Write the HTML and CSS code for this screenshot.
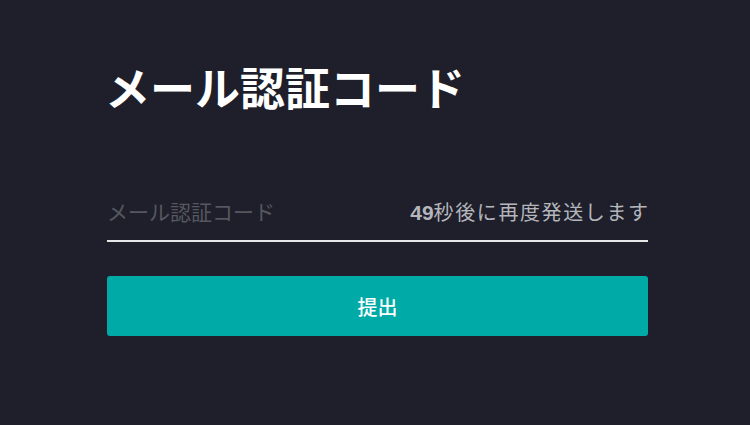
FILE: index.html
```html
<!DOCTYPE html>
<html lang="ja">
<head>
<meta charset="utf-8">
<link rel="stylesheet" href="styles.css">
</head>
<body>
<main class="panel">
  <h1 class="title">メール認証コード</h1>
  <div class="field">
    <input class="code-input" type="text" placeholder="メール認証コード">
    <span class="resend"><b class="count">49</b>秒後に再度発送します</span>
  </div>
  <button class="submit" type="button">提出</button>
</main>
</body>
</html>
```
FILE: styles.css
```css
html, body {
  margin: 0;
  padding: 0;
  background: #1e1f2b;
  font-family: "Noto Sans CJK JP", "Noto Sans", sans-serif;
}
.panel {
  width: 541px;
  margin-left: 107px;
  padding-top: 56px;
  display: flex;
  flex-direction: column;
}
.title {
  margin: 0;
  color: #ffffff;
  font-size: 45px;
  font-weight: 700;
  line-height: 62px;
  margin-left: -2px;
}
.field {
  margin-top: 72px;
  display: flex;
  align-items: center;
  height: 42px;
  padding-bottom: 8px;
  border-bottom: 2px solid #e6e6e8;
}
.code-input {
  flex: 1;
  min-width: 0;
  background: transparent;
  border: none;
  outline: none;
  padding: 0;
  font-family: inherit;
  font-size: 21px;
  color: #ffffff;
}
.code-input::placeholder {
  color: #55575f;
}
.resend {
  color: #b4b6bb;
  font-size: 20px;
  letter-spacing: 1.6px;
  margin-right: -1.6px;
}
.count {
  font-family: "Liberation Sans", Arial, sans-serif;
  font-size: 21px;
  font-weight: 700;
  letter-spacing: 0;
}
.submit {
  margin-top: 34px;
  height: 60px;
  border: none;
  border-radius: 3px;
  background: #00aaa6;
  color: #ffffff;
  font-family: inherit;
  font-size: 20px;
  font-weight: 500;
}
```
